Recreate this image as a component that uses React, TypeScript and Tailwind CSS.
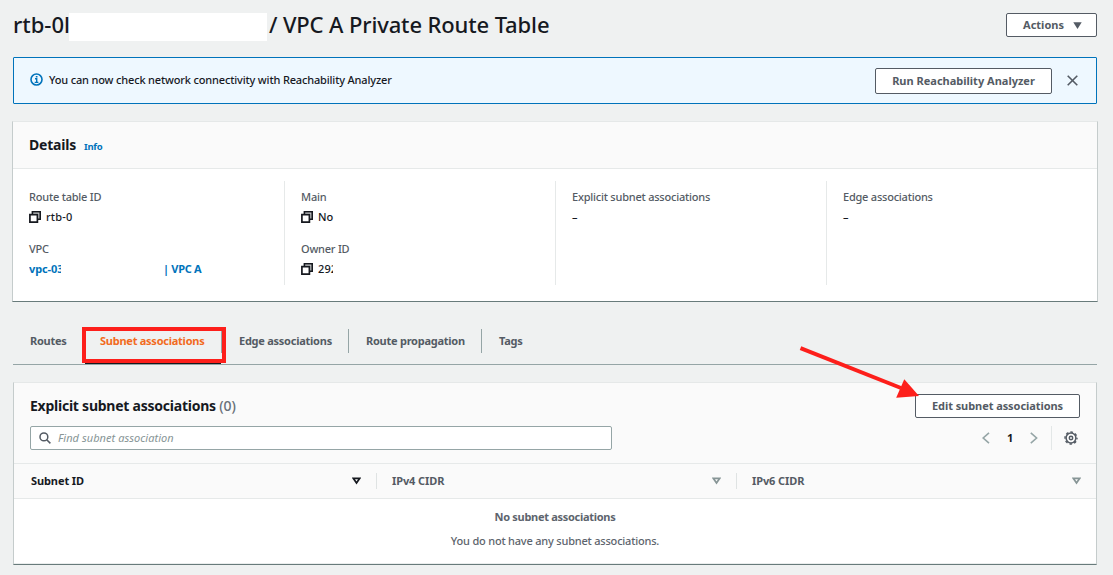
import type { ReactNode } from "react";

function CopyIcon() {
  return (
    <svg className="mr-[5px] h-3 w-3 shrink-0" viewBox="0 0 12 12" fill="none">
      <path d="M3.4 3.400V.8h7.800v7.400H8.600" fill="#c9cbcd" stroke="#16191f" strokeWidth="1.600" />
      <path d="M.9 3.600h7.500v7.500H.9z" fill="#fff" stroke="#16191f" strokeWidth="1.700" />
    </svg>
  );
}

function InfoIcon() {
  return (
    <svg className="mt-[-2px] h-[13px] w-[13px] shrink-0" viewBox="0 0 13 13" fill="none">
      <circle cx="6.5" cy="6.5" r="5.5" stroke="#0073bb" strokeWidth="1.6" />
      <path d="M5 5.800h1.700v3.700M4.700 9.400h3.700" stroke="#0073bb" strokeWidth="1.400" />
      <path d="M5.800 3h1.700v1.500H5.800z" fill="#0073bb" />
    </svg>
  );
}

function SortIcon({ active }: { active?: boolean }) {
  return (
    <svg className="mb-px h-[8px] w-[9px]" viewBox="0 0 9 8" fill="none" stroke={active ? "#16191f" : "#879596"} strokeWidth="1.8">
      <path d="M1.400 1.400h6.200L4.500 6z" />
    </svg>
  );
}

function GearIcon() {
  return (
    <svg className="h-[14px] w-[14px]" viewBox="0 0 14 14" fill="none" stroke="#545b64">
      <circle cx="7" cy="7" r="4.900" strokeWidth="1.500" />
      <circle cx="7" cy="7" r="6" strokeWidth="1.400" strokeDasharray="2.600 2.112" strokeDashoffset="1.300" />
      <circle cx="7" cy="7" r="1.700" strokeWidth="1.500" />
    </svg>
  );
}

function Button({ className, children }: { className: string; children: ReactNode }) {
  return (
    <button className={`flex items-center justify-center rounded-[2px] border border-[#545b64] bg-white font-bold text-[#545b64] ${className}`}>
      {children}
    </button>
  );
}

function Field({ label, children }: { label: string; children: ReactNode }) {
  return (
    <div className="h-[52px]">
      <div className="h-5 leading-5 tracking-[-0.22px] text-[#545b64]">{label}</div>
      <div className="flex h-5 items-center text-[#16191f]">{children}</div>
    </div>
  );
}

const column = "h-[104px] border-l border-[#e6e9e9] pl-4 pt-[6px]";

function Tab({ children, divider, className }: { children: ReactNode; divider?: boolean; className: string }) {
  return (
    <div className={`flex h-6 items-center ${divider ? "border-r border-[#95a5a6]" : ""} ${className}`}>
      {children}
    </div>
  );
}

function HeaderCell({ children, active, first, className }: { children: ReactNode; active?: boolean; first?: boolean; className: string }) {
  return (
    <div className={`flex h-4 items-center justify-between pr-[15px] font-bold tracking-[-0.1px] ${first ? "" : "border-l border-[#dfe3e3]"} ${active ? "text-[#16191f]" : "text-[#545b64]"} ${className}`}>
      <span>{children}</span>
      <SortIcon active={active} />
    </div>
  );
}

export default function App() {
  return (
    <div className="relative h-[575px] w-[1113px] overflow-hidden whitespace-nowrap bg-[#eff1f1] pl-3 font-['Noto_Sans','Open_Sans',sans-serif] text-[11px] font-medium tracking-[-0.16px] text-[#16191f]">
      <header className="flex h-[57px] w-[1085px] items-start justify-between pt-[13px]">
        <h1 className="flex h-7 items-center text-[22px] font-medium leading-7 tracking-[-0.13px]">
          <span className="mt-[-6px] w-[57px] overflow-hidden pl-px tracking-[0px]">rtb-0l</span>
          <span className="h-7 w-[198px] shrink-0 bg-white" />
          <span className="mt-[-6px] pl-[2px]">/ VPC A Private Route Table</span>
        </h1>
        <Button className="h-6 w-[91px] gap-[9px] pl-[2px] tracking-normal">
          Actions
          <svg className="h-[7px] w-[9px]" viewBox="0 0 9 7" fill="#545b64"><path d="M.3.3h8.400L4.500 6.900z" /></svg>
        </Button>
      </header>

      <section className="ml-px flex h-[47px] w-[1084px] items-center rounded-[1px] border border-[#0073bb] bg-[#eef8ff] pl-4">
        <InfoIcon />
        <span className="ml-[6px] flex-1">You can now check network connectivity with Reachability Analyzer</span>
        <Button className="h-[26px] w-[177px] pt-px tracking-normal">Run Reachability Analyzer</Button>
        <svg className="ml-[15px] mr-[18px] h-[11px] w-[11px]" viewBox="0 0 11 11" fill="none" stroke="#545b64" strokeWidth="1.6">
          <path d="M.7.7l9.600 9.600M10.300.7L.7 10.300" />
        </svg>
      </section>

      <section className="mt-[17px] h-[181px] w-[1086px] border border-b-[#687b7b] border-l-[#c5cccc] border-r-[#c5cccc] border-t-[#e5e8e8] bg-white">
        <div className="flex h-[47px] items-center border-b border-[#e6e9e9] bg-[#fafafa] pl-4">
          <h2 className="mt-[-2px] text-[14px] font-bold tracking-[-0.2px]">Details</h2>
          <a className="ml-2 mt-1 text-[9.500px] font-bold tracking-[-0.3px] text-[#0073bb]">Info</a>
        </div>
        <div className="grid grid-cols-[271px_271px_271px_1fr] pt-3">
          <div className="h-[104px] pl-4 pt-[6px]">
            <Field label="Route table ID"><CopyIcon /><span className="tracking-[0.2px]">rtb-0</span></Field>
            <Field label="VPC">
              <span className="w-[32px] overflow-hidden font-bold tracking-[-0.1px] text-[#0073bb]">vpc-03</span>
              <span className="ml-[102px] font-bold tracking-[-0.3px] text-[#0073bb]">| VPC A</span>
            </Field>
          </div>
          <div className={column}>
            <Field label="Main"><CopyIcon />No</Field>
            <Field label="Owner ID"><CopyIcon /><span className="w-[15px] overflow-hidden tracking-[0.1px]">292</span></Field>
          </div>
          <div className={column}><Field label="Explicit subnet associations">–</Field></div>
          <div className={column}><Field label="Edge associations">–</Field></div>
        </div>
      </section>

      <nav className="ml-px flex h-[63px] w-[1084px] items-start border-b border-[#95a5a6] pt-[27px] font-bold tracking-[-0.25px] text-[#545b64]">
        <Tab className="w-[70px] pl-[17px]">Routes</Tab>
        <Tab divider className="w-[139px] pl-[17px] text-[#f26b21]">Subnet associations</Tab>
        <Tab divider className="w-[127px] pl-[17px]">Edge associations</Tab>
        <Tab divider className="w-[133px] pl-[17px]">Route propagation</Tab>
        <Tab className="pl-[17px]">Tags</Tab>
      </nav>

      <section className="ml-px mt-[17px] h-[183px] w-[1084px] border border-b-[#687b7b] border-l-[#c5cccc] border-r-[#c5cccc] border-t-[#e5e8e8] bg-white">
        <div className="h-[81px] border-b border-[#e6e9e9] bg-[#fafafa] pl-4 pr-4 pt-[11px]">
          <div className="flex h-6 items-center justify-between">
            <h2 className="mt-[-2px] text-[14px] font-bold tracking-[-0.24px]">
              Explicit subnet associations <span className="font-medium tracking-[-0.1px] text-[#687078]">(0)</span>
            </h2>
            <Button className="h-6 w-[165px] tracking-[-0.07px]">Edit subnet associations</Button>
          </div>
          <div className="mt-2 flex h-6 items-center justify-between">
            <div className="flex h-6 w-[582px] items-center rounded-[2px] border border-[#95a5a6] bg-white pl-2">
              <svg className="h-3 w-3" viewBox="0 0 12 12" fill="none" stroke="#545b64" strokeWidth="1.500">
                <circle cx="4.900" cy="4.900" r="3.900" /><path d="M7.700 7.700l3.700 3.700" />
              </svg>
              <span className="ml-[7px] font-normal italic tracking-[0.05px] text-[#879596]">Find subnet association</span>
            </div>
            <div className="flex h-6 items-center">
              <svg className="h-3 w-2" viewBox="0 0 8 12" fill="none" stroke="#95a5a6" strokeWidth="1.600"><path d="M7 .8L1.200 6 7 11.200" /></svg>
              <span className="w-10 text-center font-bold">1</span>
              <svg className="h-3 w-2" viewBox="0 0 8 12" fill="none" stroke="#95a5a6" strokeWidth="1.600"><path d="M.8.8L6.600 6 .8 11.200" /></svg>
              <span className="ml-[13px] mr-3 h-6 w-px bg-[#e3e7e7]" />
              <span className="mr-[2px]"><GearIcon /></span>
            </div>
          </div>
        </div>
        <div className="flex h-[35px] items-center border-b border-[#e6e9e9] bg-[#fafafa]">
          <HeaderCell first active className="w-[362px] pl-[17px]">Subnet ID</HeaderCell>
          <HeaderCell className="w-[360px] pl-[15px]">IPv4 CIDR</HeaderCell>
          <HeaderCell className="w-[360px] pl-[15px]">IPv6 CIDR</HeaderCell>
        </div>
        <div className="flex h-[65px] flex-col items-center border-b border-[#eaeded] pt-[6px] text-[#5d646d]">
          <div className="h-6 leading-6 font-bold tracking-[-0.29px]">No subnet associations</div>
          <div className="h-6 leading-6 tracking-[-0.2px]">You do not have any subnet associations.</div>
        </div>
      </section>

      <div className="absolute left-[85px] top-[361px] h-[3px] w-[136px] bg-[#16191f]" />
      <div className="absolute left-[82px] top-[327px] h-9 w-36 border-4 border-[#fd1f1b]" />
      <svg className="absolute left-[795px] top-[340px] h-16 w-[130px]" viewBox="0 0 130 64">
        <path d="M5.500 8.200L106 48" stroke="#fd1f1b" strokeWidth="4" fill="none" />
        <path d="M109.300 39.300L124 56 101.200 57.700z" fill="#fd1f1b" />
      </svg>
    </div>
  );
}
